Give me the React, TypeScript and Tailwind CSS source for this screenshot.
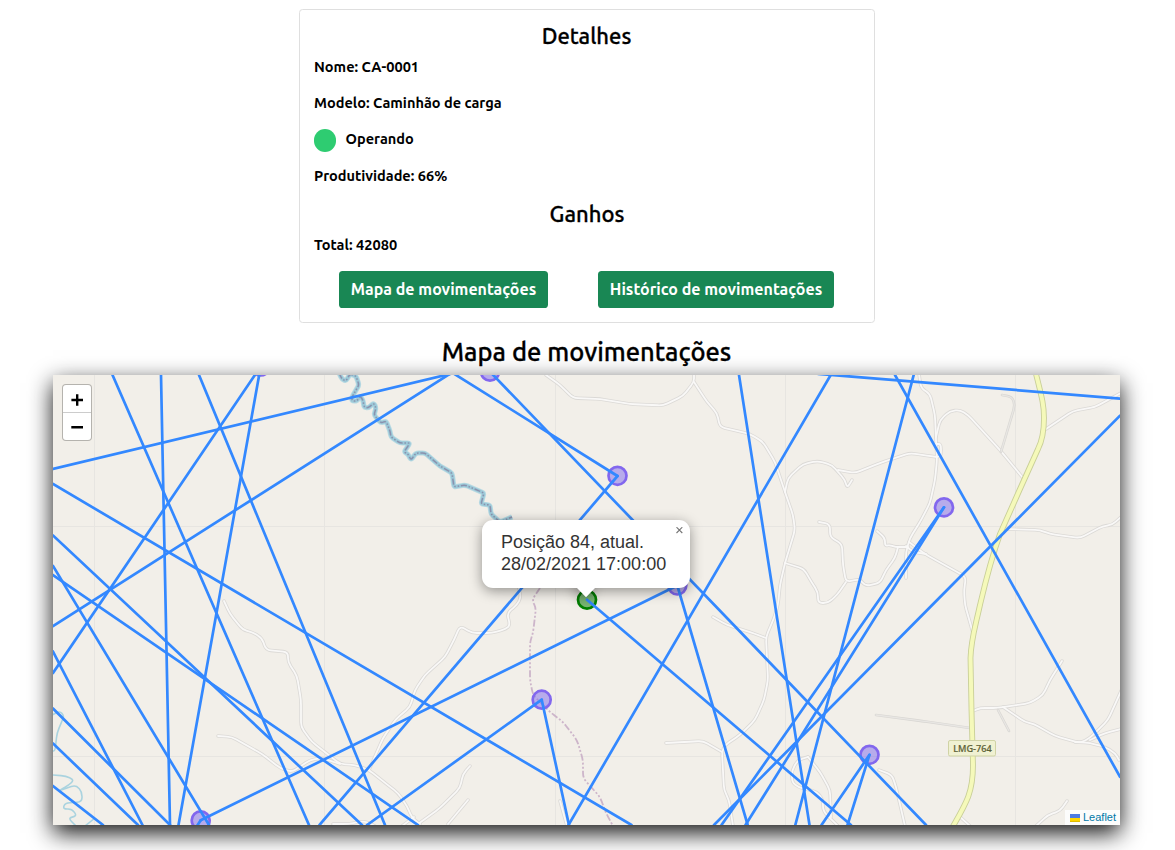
const ROADS = [
  "M224 601L230 614L243 630L252 632L262 638L266 650L288 652L288 662L297 676L301 700L301 727L312 742L330 756L340 764L355 765L369 770L384 782L398 793L407 806L412 818L420 824",
  "M369 770L383 738L396 719L410 707L415 690L425 675L445 657L454 640L460 626L472 633L492 633L506 629L510 625L507 613L517 605L521 597L518 585",
  "M418 824L440 808L460 788L463 774L470 766",
  "M448 824L468 800",
  "M218 736L232 737L262 754L280 768L292 772L310 760L322 758L340 764",
  "M333 824L348 824L365 821L375 826",
  "M402 826L414 817",
  "M546 375L560 385L573 398L600 399L630 404L663 405.5L683 396L694 382L694 374",
  "M694 382L707 402L717 413L720 427L733 430L750 434L763 442L775 462L785 492L793 515L795 530L785 563L780 585L778 605L774 618L766 637L768 680L764 700L755 720L740 735L725 745L722 752L724 790L729 800L733 826",
  "M666 743L703 741L722 752",
  "M713 617L727 625L750 632L766 638",
  "M785 492L788 478L803 464L818 461L832 465L845 480L847 488L852 480",
  "M838 470L855 473L880 463L910 453L922 455L937 457",
  "M919 374L921 388L930 394L935 415L936 440L937 460L935 480L930 503L920 522L910 538L906 552L906 578",
  "M936 437L940 420L950 411L960 410L968 415L1000 450L1023 478",
  "M936 444L941 444L941 456L937 457",
  "M1046 429L1073 411L1095 407L1121 393",
  "M1006 529L1040 530L1050 534L1080 538L1103 526L1112 525L1121 517",
  "M819 522L830 524L830 537L842 544L843 565L846 582L860 579L865 586L880 583L886 570L895 558L898 547",
  "M877 531L885 538L885 546L890 545L895 547L908 547",
  "M909 542L925 554L966 577L964 590L965 605L973 633",
  "M906 546L913 552L926 554",
  "M785 563L804 569L812 583L818 592L818 603L828 603L837 595L846 582",
  "M973 711L980 708L998 708L1030 703L1043 695L1050 680L1062 661",
  "M1003 707L1025 722L1034 724L1055 736L1080 743L1090 738L1108 720L1121 691",
  "M1075 742L1090 743L1105 747L1115 753L1119 760",
  "M1090 740L1105 733L1121 729",
  "M879 770L892 775L896 787L905 826",
  "M1036 826L1048 815L1060 811L1067 801",
  "M959 816L970 826",
  "M808 757L820 772L830 790L831 817",
  "M808 757L798 760L792 770L792 782L798 787L817 792L823 800L823 811L838 826",
  "M560 801L567 826",
];

const TRACKS = [
  "M1002 395L1012 397L1015 405L1001 452",
  "M998 710L1009 731",
  "M876 715L922 721L970 728",
];

const HIGHWAY =
  "M1036 374C1042 398 1044 405 1044 418S1042 441 1038 449L1020 489L1000 534C990 562 984 588 980 605C974 632 971 640 970.5 658L971.5 710L973 765C973 792 967 802 952 828";

const RIVER =
  "M339 373L342 379L346 381L350 374L356 376L359 385L352 397L352 401L357 401L360 396L363 400L364 407L368 408L374 403L376 408L374 415L381 423L386 421L390 431L391 437L400 443L410 443L404 452L408 454L411 460L416 453L425 453L440 466L452 473L454 487L465 485L484 493L481 504L490 505L491 514L500 522L512 517";

const STREAMS = [
  "M52 715L60 711L64 716L62 721L57 733L55 751L52 751",
  "M52 775L66 776L74 780L69 785L58 791L76 785L82 792L82 802L65 803L63 809L72 809L77 816L68 818L76 826",
  "M85 826L95 818",
];

const BOUNDARY =
  "M540 588L532 600L536 608L533 633L530 642L530 680L533 695L541 703L550 712L563 722L577 740L583 760L583 778L600 797L606 813L613 826";

const TRIPS = [
  [112.5, 375, 309, 825],
  [161, 375, 170, 825],
  [199, 375, 385, 825],
  [260.7, 366.5, 53, 673],
  [260.7, 366.5, 178.5, 825],
  [53, 469, 452, 373.5],
  [53, 626, 452, 372.5],
  [452, 372.5, 617.5, 476],
  [490, 371.7, 926, 825],
  [617.5, 476, 319.5, 825],
  [677.3, 585.5, 200.7, 820.3],
  [200.7, 820.3, 197, 826],
  [677.3, 585.5, 747.7, 825],
  [53, 484, 631.5, 825],
  [53, 535.5, 362, 825],
  [53, 575, 418, 825],
  [53, 566, 209, 825],
  [53, 651.5, 142.5, 825],
  [53, 708.5, 170, 825],
  [53, 743.5, 138, 825],
  [53, 786, 103, 825],
  [541.7, 699.7, 367, 825],
  [541.7, 699.7, 569, 825],
  [568.5, 825, 830.7, 375],
  [587, 599.7, 851, 825],
  [739, 375, 809.5, 825],
  [818, 373.8, 1120, 398.6],
  [913.7, 375, 795.3, 825],
  [895, 375, 1120, 776.8],
  [1120, 415.7, 714, 825],
  [944, 507.3, 721.5, 825],
  [944, 507.3, 745.5, 825],
  [869.5, 754.8, 821.5, 825],
  [869.5, 754.8, 847.5, 825],
];

const STOPS = [
  [260.7, 366.5],
  [490, 371.7],
  [617.5, 475.8],
  [944, 507.3],
  [677.3, 585.5],
  [541.7, 699.7],
  [869.5, 754.8],
  [200.7, 820.3],
];

/** Rounds the corners of a straight-segment path, starting each curve at most `reach` units from its corner. */
function smooth(path: string, reach = 5): string {
  const pts = path
    .slice(1)
    .split("L")
    .map((p) => p.split(" ").map(Number));
  let out = `M${pts[0][0]} ${pts[0][1]}`;
  for (let i = 1; i < pts.length - 1; i++) {
    const [x, y] = pts[i];
    const toward = ([tx, ty]: number[]) => {
      const len = Math.hypot(tx - x, ty - y);
      const t = Math.min(reach / len, 0.45);
      return `${(x + (tx - x) * t).toFixed(2)} ${(y + (ty - y) * t).toFixed(2)}`;
    };
    out += `L${toward(pts[i - 1])}Q${x} ${y} ${toward(pts[i + 1])}`;
  }
  const end = pts[pts.length - 1];
  return `${out}L${end[0]} ${end[1]}`;
}

function MapCanvas() {
  return (
    <svg className="block h-full w-full" viewBox="53 375 1067 450" fill="none">
      <rect x="53" y="375" width="1067" height="450" fill="#f2efe9" />
      <g stroke="#e7e5e1" strokeWidth="1">
        {[94.5, 324.5, 555.5, 785.5, 1015.5].map((x) => (
          <path key={x} d={`M${x} 375V825`} />
        ))}
        <path d="M53 526.5H1120M53 756.5H1120" />
      </g>
      {STREAMS.map((d) => (
        <path key={d} d={smooth(d)} stroke="#aad3df" strokeWidth="1.6" />
      ))}
      <path d={smooth(RIVER, 2.5)} stroke="#b9dae3" strokeWidth="5.2" />
      <path d={smooth(RIVER, 2.5)} stroke="#9cc9d8" strokeWidth="3.4" />
      <path d={smooth(RIVER, 2.5)} stroke="#8a92ae" strokeWidth="1.5" strokeDasharray="6 1.8 1.5 1.8 1.5 1.8" />
      <g stroke="#dbd9d6" strokeWidth="3.4" strokeLinejoin="round" strokeLinecap="round">
        {ROADS.map((d) => (
          <path key={d} d={smooth(d)} />
        ))}
      </g>
      <g stroke="#f9f8f7" strokeWidth="1.8" strokeLinejoin="round" strokeLinecap="round">
        {ROADS.map((d) => (
          <path key={d} d={smooth(d)} />
        ))}
      </g>
      <g strokeLinejoin="round" strokeLinecap="round">
        {TRACKS.map((d) => (
          <path key={d} d={smooth(d)} stroke="#d8d6d2" strokeWidth="2.6" />
        ))}
        {TRACKS.map((d) => (
          <path key={d + "i"} d={smooth(d)} stroke="#e8e6e3" strokeWidth="1.3" />
        ))}
      </g>
      <path d={smooth(BOUNDARY)} stroke="#cdb5ca" strokeWidth="1.8" strokeDasharray="7 2 2 2 2 2" />
      <path d={HIGHWAY} stroke="#c9cf98" strokeWidth="5.8" />
      <path d={HIGHWAY} stroke="#f5f9ba" strokeWidth="4" />
      <rect x="948.5" y="740.5" width="47" height="15.5" rx="1.5" fill="#f0f1d2" stroke="#d0d3a5" />
      <text x="972.4" y="751.6" textAnchor="middle" fill="#5f6338" fontFamily="'Noto Sans', sans-serif" fontSize="9.4" fontWeight="500" stroke="#5f6338" strokeWidth="0.2" textLength="38.5" lengthAdjust="spacingAndGlyphs">
        LMG-764
      </text>
      {STOPS.map(([x, y]) => (
        <circle key={x} cx={x} cy={y} r="9" fill="#7b68ee" fillOpacity="0.5" stroke="#8267ee" strokeWidth="2.7" />
      ))}
      <circle cx="587" cy="599.7" r="9" fill="#008000" fillOpacity="0.5" stroke="#008000" strokeWidth="2.7" />
      <g stroke="#3388ff" strokeWidth="2.7" strokeLinecap="round">
        {TRIPS.map(([x1, y1, x2, y2], i) => (
          <line key={i} x1={x1} y1={y1} x2={x2} y2={y2} />
        ))}
      </g>
    </svg>
  );
}

function ZoomControl() {
  return (
    <div className="absolute top-[9px] left-[9px] w-[30px] overflow-hidden rounded-[4px] border border-black/25 bg-white bg-clip-padding">
      <button className="flex h-[28px] w-full items-center justify-center border-b border-[#ccc]" aria-label="Aumentar">
        <svg className="mt-[2px]" width="12" height="12" viewBox="0 0 12 12" stroke="#000" strokeWidth="2.4">
          <path d="M.4 6h11.6M6.2 .2v11.5" />
        </svg>
      </button>
      <button className="flex h-[27px] w-full items-center justify-center" aria-label="Diminuir">
        <svg width="12" height="12" viewBox="0 0 12 12" stroke="#000" strokeWidth="2.5">
          <path d="M.3 6.2h11.7" />
        </svg>
      </button>
    </div>
  );
}

function Popup() {
  return (
    <div className="absolute top-[145px] left-[429px] w-[208px] font-['Liberation_Sans',Arial,sans-serif]">
      <div className="absolute top-[60px] left-[97px] size-[14px] rotate-45 bg-white shadow-[0_3px_14px_rgba(0,0,0,0.4)]" />
      <div className="relative h-[68px] rounded-[11px] bg-white pt-[11px] pl-[19px] text-[18px] leading-[22px] text-[#333] shadow-[0_3px_13px_rgba(0,0,0,0.4)]">
        <p className="whitespace-nowrap">Posição 84, atual.</p>
        <p className="whitespace-nowrap">28/02/2021 17:00:00</p>
        <svg className="absolute top-[7px] right-[7px]" width="7" height="7" viewBox="0 0 7 7" stroke="#757575" strokeWidth="1.1">
          <path d="M.5 .2L6.3 6M6.3 .2L.5 6" />
        </svg>
      </div>
      <div className="absolute top-[60px] left-[97px] size-[14px] rotate-45 bg-white" />
    </div>
  );
}

export default function App() {
  return (
    <div className="h-[850px] overflow-hidden bg-white font-['Ubuntu','Noto_Sans',sans-serif] text-black">
      <section className="mt-[9px] ml-[299px] flex h-[314px] w-[576px] flex-col rounded-[3.6px] border border-[#dfdfdf] px-[14px]">
        <h2 className="mt-[12px] mr-[1px] text-center text-[22px] leading-[27px] font-medium [-webkit-text-stroke:0.3px_black]">Detalhes</h2>
        <p className="mt-[8px] text-[14.55px] leading-[20px] font-bold">Nome: CA-0001</p>
        <p className="mt-[16px] text-[14.55px] leading-[20px] font-bold">Modelo: Caminhão de carga</p>
        <div className="mt-[16px] flex h-[22px] gap-[9.5px]">
          <span className="h-[23px] w-[22px] shrink-0 rounded-full bg-[#2ecc71]" />
          <p className="text-[14.55px] leading-[20px] font-bold">Operando</p>
        </div>
        <p className="mt-[15px] text-[14.55px] leading-[20px] font-bold">Produtividade: 66%</p>
        <h2 className="mt-[14px] text-center text-[22px] leading-[27px] font-medium [-webkit-text-stroke:0.3px_black]">Ganhos</h2>
        <p className="mt-[8px] text-[14.55px] leading-[20px] font-bold">Total: 42080</p>
        <div className="mt-[16px] flex gap-[50px] pl-[25px] text-[16px] leading-[37px] font-bold text-white">
          <button className="h-[37px] w-[209px] rounded-[3.6px] bg-[#198754] whitespace-nowrap">Mapa de movimentações</button>
          <button className="h-[37px] w-[236px] rounded-[3.6px] bg-[#198754] whitespace-nowrap">Histórico de movimentações</button>
        </div>
      </section>
      <h1 className="relative z-10 mt-[13px] mr-[2px] text-center text-[25.5px] leading-[32px] font-medium [-webkit-text-stroke:0.3px_black]">Mapa de movimentações</h1>
      <main className="relative mt-[7px] ml-[53px] h-[450px] w-[1067px] shadow-[0_8px_22px_rgba(0,0,0,0.93)]">
        <div className="h-full overflow-hidden">
          <MapCanvas />
        </div>
        <ZoomControl />
        <Popup />
        <div className="absolute right-0 bottom-0 flex h-[15px] w-[55px] items-center gap-[3px] bg-white/80 pl-[5px] font-['Liberation_Sans',Arial,sans-serif] text-[11px] text-[#0078a8]">
          <svg width="10" height="8" viewBox="0 0 10 8">
            <path fill="#4c7be1" d="M0 0h10v4H0z" />
            <path fill="#ffd500" d="M0 4h10v3H0z" />
            <path fill="#e0bc00" d="M0 7h10v1H0z" />
          </svg>
          <a>Leaflet</a>
        </div>
      </main>
    </div>
  );
}
